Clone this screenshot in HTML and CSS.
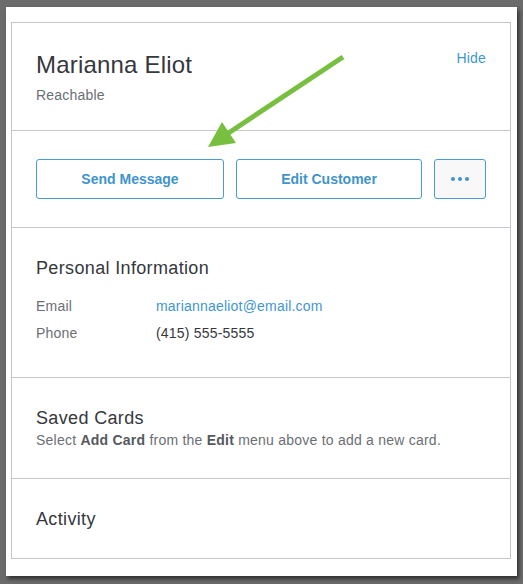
FILE: index.html
```html
<!DOCTYPE html>
<html>
<head>
<meta charset="utf-8">
<link rel="stylesheet" href="styles.css">
</head>
<body>
<div class="panel">
  <div class="card">
    <section class="header">
      <div class="who">
        <h1 class="name">Marianna Eliot</h1>
        <div class="status">Reachable</div>
      </div>
      <a class="hide">Hide</a>
    </section>
    <section class="actions">
      <button class="btn">Send Message</button>
      <button class="btn">Edit Customer</button>
      <button class="btn more" aria-label="More"><span class="dot"></span><span class="dot"></span><span class="dot"></span></button>
    </section>
    <section class="info">
      <h2 class="title">Personal Information</h2>
      <div class="row"><span class="label">Email</span><span class="value link">mariannaeliot@email.com</span></div>
      <div class="row"><span class="label">Phone</span><span class="value">(415) 555-5555</span></div>
    </section>
    <section class="cards">
      <h2 class="title">Saved Cards</h2>
      <p class="hint">Select <b>Add Card</b> from the <b>Edit</b> menu above to add a new card.</p>
    </section>
    <section class="activity">
      <h2 class="title">Activity</h2>
    </section>
  </div>
  <svg class="arrow" width="523" height="584" viewBox="0 0 523 584">
    <line x1="343" y1="57" x2="224" y2="136" stroke="#78bf3f" stroke-width="5"/>
    <polygon points="208,147 222,122 236,143" fill="#78bf3f"/>
  </svg>
</div>
</body>
</html>
```

FILE: styles.css
```css
* { box-sizing: border-box; }
html, body { margin: 0; padding: 0; }
body {
  background: #6b6b6b;
  font-family: "Liberation Sans", Arial, sans-serif;
  width: 523px;
  height: 584px;
  overflow: hidden;
}
.panel {
  position: relative;
  margin: 7px 0 0 6px;
  width: 511px;
  height: 569px;
  background: #fff;
  padding: 15px 0 0 5px;
  box-shadow: 2px 3px 4px rgba(0,0,0,0.55);
}
.card {
  width: 500px;
  height: 537px;
  border: 1px solid #c4c4ca;
}
section { border-bottom: 1px solid #c6c6cb; padding-left: 24px; padding-right: 24px; }
section:last-child { border-bottom: 0; }
.header {
  display: flex;
  justify-content: space-between;
  align-items: flex-start;
  padding-top: 27px;
  height: 108px;
}
.name {
  margin: 0;
  font-size: 24px;
  line-height: 29px;
  font-weight: normal;
  letter-spacing: 0.2px;
  color: #35383d;
}
.status {
  margin-top: 6px;
  font-size: 14px;
  line-height: 20px;
  letter-spacing: 0.2px;
  color: #6b6f74;
}
.hide {
  font-size: 14px;
  line-height: 20px;
  letter-spacing: 0.2px;
  color: #3f96cf;
  margin-top: -2px;
}
.actions {
  display: grid;
  grid-template-columns: 188px 186px 52px;
  column-gap: 12px;
  padding-top: 28px;
  height: 97px;
}
.btn {
  height: 40px;
  border: 1px solid #4a9dd3;
  border-radius: 3px;
  background: #fff;
  color: #3f94cc;
  font-family: inherit;
  font-size: 14px;
  font-weight: bold;
  padding: 0;
}
.more {
  background: #f8f8f8;
  display: flex;
  justify-content: center;
  align-items: center;
  gap: 3px;
}
.dot {
  width: 4px;
  height: 4px;
  border-radius: 50%;
  background: #3f94cc;
}
.title {
  margin: 0;
  font-size: 18px;
  line-height: 24px;
  font-weight: normal;
  letter-spacing: 0.35px;
  color: #35383d;
}
.info {
  padding-top: 28px;
  height: 150px;
}
.info .title { margin-bottom: 13px; }
.row {
  display: flex;
  font-size: 14px;
  line-height: 27px;
  letter-spacing: 0.2px;
}
.label { width: 120px; color: #6b6f74; }
.value { color: #35383d; }
.link { color: #3f96cf; }
.cards {
  padding-top: 28px;
  height: 101px;
}
.hint {
  margin: 0;
  font-size: 14px;
  line-height: 20px;
  letter-spacing: 0.23px;
  color: #6b6f74;
}
.hint b { color: #55595e; }
.activity {
  padding-top: 28px;
}
.arrow {
  position: absolute;
  left: -6px;
  top: -7px;
  pointer-events: none;
}
```
